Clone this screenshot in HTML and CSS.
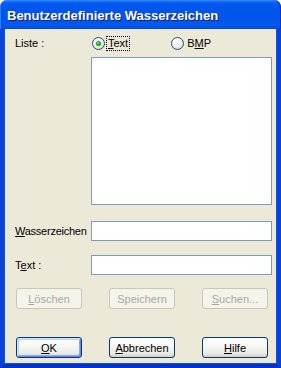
FILE: index.html
```html
<!DOCTYPE html>
<html lang="de">
<head>
<meta charset="utf-8">
<title>Benutzerdefinierte Wasserzeichen</title>
<link rel="stylesheet" href="styles.css">
</head>
<body>
<div class="window">
  <div class="titlebar"><span class="title">Benutzerdefinierte Wasserzeichen</span></div>
  <div class="client">
    <div class="row radio-row">
      <span class="label">Liste :</span>
      <div class="radios">
        <label class="radio">
          <svg class="rb" width="13" height="13" viewBox="0 0 13 13">
            <defs><radialGradient id="rg1" cx="0.35" cy="0.3" r="0.8"><stop offset="0" stop-color="#ffffff"/><stop offset="0.6" stop-color="#f0efe8"/><stop offset="1" stop-color="#d4d1c1"/></radialGradient></defs>
            <circle cx="6.5" cy="6.5" r="6" fill="url(#rg1)" stroke="#1c5180" stroke-width="1"/>
            <circle cx="6.5" cy="6.5" r="2.6" fill="#2fa52f"/>
            <circle cx="6" cy="6" r="1" fill="#7fd37f"/>
          </svg>
          <span class="focus"><u>T</u>ext</span>
        </label>
        <label class="radio bmp">
          <svg class="rb" width="13" height="13" viewBox="0 0 13 13">
            <defs><radialGradient id="rg2" cx="0.35" cy="0.3" r="0.8"><stop offset="0" stop-color="#ffffff"/><stop offset="0.6" stop-color="#f0efe8"/><stop offset="1" stop-color="#d4d1c1"/></radialGradient></defs>
            <circle cx="6.5" cy="6.5" r="6" fill="url(#rg2)" stroke="#1c5180" stroke-width="1"/>
          </svg>
          <span class="plain">B<u>M</u>P</span>
        </label>
      </div>
    </div>
    <div class="row list-row">
      <span class="label"></span>
      <div class="listbox"></div>
    </div>
    <div class="row field-row first">
      <span class="label tight"><u>W</u>asserzeichen</span>
      <div class="field"></div>
    </div>
    <div class="row field-row">
      <span class="label">T<u>e</u>xt :</span>
      <div class="field"></div>
    </div>
    <div class="buttons top">
      <button class="btn disabled"><u>L</u>öschen</button>
      <button class="btn disabled">Speichern</button>
      <button class="btn disabled"><u>S</u>uchen...</button>
    </div>
    <div class="buttons bottom">
      <button class="btn default"><u>O</u>K</button>
      <button class="btn"><u>A</u>bbrechen</button>
      <button class="btn"><u>H</u>ilfe</button>
    </div>
  </div>
</div>
</body>
</html>
```
FILE: styles.css
```css
html, body {
  margin: 0;
  padding: 0;
  background: #ffffff;
}
.window {
  width: 281px;
  height: 368px;
  display: flex;
  flex-direction: column;
  font-family: "Liberation Sans", Arial, sans-serif;
  font-size: 11px;
  color: #000;
}
.titlebar {
  height: 29px;
  flex: none;
  box-sizing: border-box;
  border-radius: 7px 7px 0 0;
  background: linear-gradient(to bottom, #3a8cff 0px, #0d63f4 2px, #0058ee 4px, #0054e8 12px, #0055ea 20px, #0159ee 25px, #0050dc 28px, #0047d4 29px);
  padding-left: 7px;
  display: flex;
  align-items: center;
  box-shadow: inset 1px 0 0 #2f7cf8, inset -1px 0 0 #0030b0;
}
.title {
  font-family: "Liberation Sans", Arial, sans-serif;
  font-weight: bold;
  font-size: 13px;
  color: #ffffff;
  text-shadow: 1px 1px 0 #0a1f75;
  margin-top: 1px;
}
.client {
  flex: 1;
  background: #ece9d8;
  border-left: 4px solid #0841d4;
  border-right: 4px solid #0841d4;
  border-bottom: 4px solid #0831c8;
  box-shadow: inset 1px 0 0 #0055ea, inset -1px 0 0 #0055ea, inset 0 -1px 0 #0055ea;
  display: flex;
  flex-direction: column;
  padding: 7px 5px 0 11px;
  box-sizing: border-box;
}
.row {
  display: grid;
  grid-template-columns: 76px 181px;
  align-items: center;
}
.label {
  white-space: nowrap;
}
.label.tight {
  letter-spacing: -0.25px;
}
.radio-row {
  height: 14px;
}
.radios {
  display: flex;
  align-items: center;
}
.radio {
  display: flex;
  align-items: center;
  gap: 2px;
  margin-left: 1px;
}
.radio.bmp {
  margin-left: 42px;
}
.rb {
  display: block;
}
.focus {
  outline: 1px dotted #000;
  outline-offset: 0;
  padding: 0 1px;
  line-height: 13px;
}
.plain {
  padding: 0 1px;
}
.list-row {
  margin-top: 7px;
}
.listbox {
  height: 148px;
  background: #fff;
  border: 1px solid #7f9db9;
  box-sizing: border-box;
}
.field-row {
  margin-top: 14px;
}
.field-row.first {
  margin-top: 16px;
}
.field {
  height: 20px;
  background: #fff;
  border: 1px solid #7f9db9;
  box-sizing: border-box;
}
.label u, .btn u, .radio u {
  text-decoration: underline;
}
.buttons {
  display: flex;
  gap: 27px;
  padding-left: 1px;
}
.buttons.top {
  margin-top: 13px;
}
.buttons.bottom {
  margin-top: 28px;
}
.btn {
  width: 66px;
  height: 21px;
  box-sizing: border-box;
  font-family: "Liberation Sans", Arial, sans-serif;
  font-size: 11px;
  color: #000;
  padding: 0;
  border: 1px solid #003c74;
  border-radius: 3px;
  background: linear-gradient(to bottom, #ffffff 0%, #f7f7f4 40%, #ecebe6 80%, #d6d0c5 100%);
  box-shadow: inset 0 -1px 0 #d6d0c5;
}
.btn.default {
  box-shadow: inset 1px 1px 0 #cee7ff, inset -1px -1px 0 #6982ee, inset 2px 2px 0 #bcd4f6, inset -2px -2px 0 #89ade4;
}
.btn.disabled {
  color: #aca899;
  border-color: #c9c7ba;
  background: #f5f4ea;
  box-shadow: none;
}
```
